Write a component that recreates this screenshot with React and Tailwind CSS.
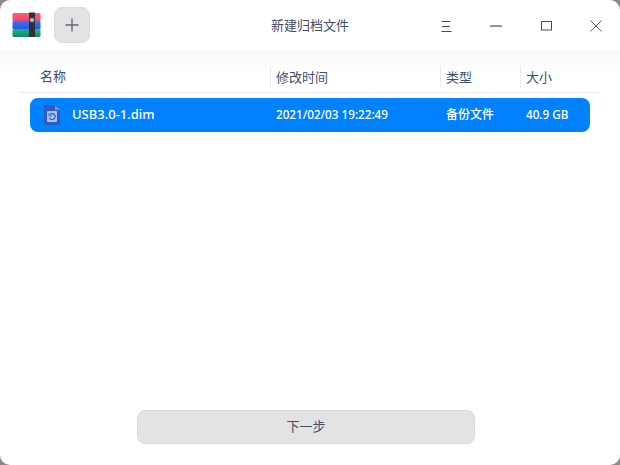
const font = { fontFamily: '"Noto Sans", "Noto Sans CJK SC", sans-serif' };

// 压缩包图标
const ArchiveIcon = () => (
  <svg width="30" height="26" viewBox="0 0 30 26" className="block">
    <defs>
      <linearGradient id="bandRed" x1="0" y1="0" x2="0" y2="1">
        <stop offset="0" stopColor="#f9646a" />
        <stop offset="1" stopColor="#ee3f78" />
      </linearGradient>
      <linearGradient id="bandBlue" x1="0" y1="0" x2="0" y2="1">
        <stop offset="0" stopColor="#2f7bf8" />
        <stop offset="1" stopColor="#2a55e0" />
      </linearGradient>
      <linearGradient id="bandGreen" x1="0" y1="0" x2="0" y2="1">
        <stop offset="0" stopColor="#1fb08a" />
        <stop offset="1" stopColor="#0f8a70" />
      </linearGradient>
    </defs>
    <rect x="0.5" y="1" width="28" height="8" rx="1.5" fill="url(#bandRed)" />
    <rect x="0.5" y="9" width="28" height="8" rx="0.5" fill="url(#bandBlue)" />
    <rect x="0.5" y="17" width="28" height="8" rx="1.5" fill="url(#bandGreen)" />
    <rect x="17" y="0.5" width="6" height="24.5" fill="#2f2f34" />
    <rect x="17.5" y="5.5" width="5" height="5" fill="#55555a" />
    <rect x="18.5" y="6.5" width="3" height="3" fill="#d0d0d0" />
  </svg>
);

const FileIcon = () => (
  <svg width="16" height="20" viewBox="0 0 16 20" className="block">
    <path d="M0 0h11l5 5v15H0z" fill="#2e5cc4" />
    <path d="M11 0l5 5h-5z" fill="#6f93de" />
    <rect x="3" y="6" width="10" height="11" rx="1" fill="#a9c2f0" />
    <path d="M6 9.5a3 3 0 1 1-.5 3.5" fill="none" stroke="#2e5cc4" strokeWidth="1.2" />
    <path d="M5 8.5v2.5h2.5" fill="none" stroke="#2e5cc4" strokeWidth="1" />
  </svg>
);

const WindowButton = ({ children }) => (
  <div className="w-[50px] h-[50px] flex items-center justify-center pl-[2px] pt-[2px]">{children}</div>
);

export default function App() {
  return (
    <div className="w-[620px] h-[465px] bg-[#8a8a8a]" style={font}>
      <div className="w-full h-full bg-white rounded-[10px] overflow-hidden flex flex-col">
        {/* 标题栏 */}
        <div className="h-[50px] shrink-0 flex items-center">
          <div className="ml-[12px] w-[30px]"><ArchiveIcon /></div>
          <div className="ml-[12px] w-[36px] h-[36px] rounded-[8px] bg-[#e3e3e3] border border-[#d9d9d9] flex items-center justify-center">
            <svg width="14" height="14" viewBox="0 0 14 14">
              <path d="M7 0.5v13M0.5 7h13" stroke="#5f6880" strokeWidth="1.4" />
            </svg>
          </div>
          <div className="flex-1 text-center text-[13px] text-[#414d68] pl-[110px] pt-[2px]">新建归档文件</div>
          <div className="flex">
            <WindowButton>
              <svg width="11" height="11" viewBox="0 0 11 11">
                <path d="M0.5 0.5h9M1 5.5h8M0.5 10.5h10" stroke="#414d68" strokeWidth="1" />
              </svg>
            </WindowButton>
            <WindowButton>
              <svg width="12" height="2" viewBox="0 0 12 2">
                <path d="M0 1h12" stroke="#414d68" strokeWidth="1.2" />
              </svg>
            </WindowButton>
            <WindowButton>
              <svg width="11" height="10" viewBox="0 0 11 10">
                <rect x="0.5" y="0.5" width="10" height="8.5" fill="none" stroke="#414d68" strokeWidth="1" />
              </svg>
            </WindowButton>
            <WindowButton>
              <svg width="12" height="12" viewBox="0 0 12 12">
                <path d="M0.5 0.5l11 11M11.5 0.5l-11 11" stroke="#414d68" strokeWidth="0.9" />
              </svg>
            </WindowButton>
          </div>
        </div>

        {/* 表头 */}
        <div className="h-[43px] shrink-0 px-[20px] bg-gradient-to-b from-[#f9f9f9] to-white to-50%">
          <div className="h-full flex items-center border-b border-[#ebebeb] text-[13px] text-[#414d68] pt-[12px]">
            <div className="w-[250px] pl-[20px]">名称</div>
            <div className="w-[170px] pl-[5px] border-l border-[#ebebeb] h-[22px] leading-[22px]">修改时间</div>
            <div className="w-[80px] pl-[5px] border-l border-[#ebebeb] h-[22px] leading-[22px]">类型</div>
            <div className="flex-1 pl-[5px] border-l border-[#ebebeb] h-[22px] leading-[22px]">大小</div>
          </div>
        </div>

        {/* 文件行 */}
        <div className="mx-[30px] mt-[5px] h-[34px] shrink-0 rounded-[8px] bg-[#0081ff] flex items-center text-white font-medium">
          <div className="w-[240px] flex items-center">
            <div className="ml-[14px] w-[28px]"><FileIcon /></div>
            <span className="text-[13px]">USB3.0-1.dim</span>
          </div>
          <div className="w-[170px] pl-[6px] text-[11.7px]">2021/02/03 19:22:49</div>
          <div className="w-[80px] pl-[6px] text-[12px]">备份文件</div>
          <div className="flex-1 pl-[6px] text-[11.7px]">40.9 GB</div>
        </div>

        {/* 下一步 */}
        <div className="mt-auto mb-[21px] flex justify-center pr-[8px]">
          <button className="w-[338px] h-[34px] rounded-[8px] bg-[#e3e3e3] border border-[#d9d9d9] text-[13px] text-[#414d68]">
            下一步
          </button>
        </div>
      </div>
    </div>
  );
}
